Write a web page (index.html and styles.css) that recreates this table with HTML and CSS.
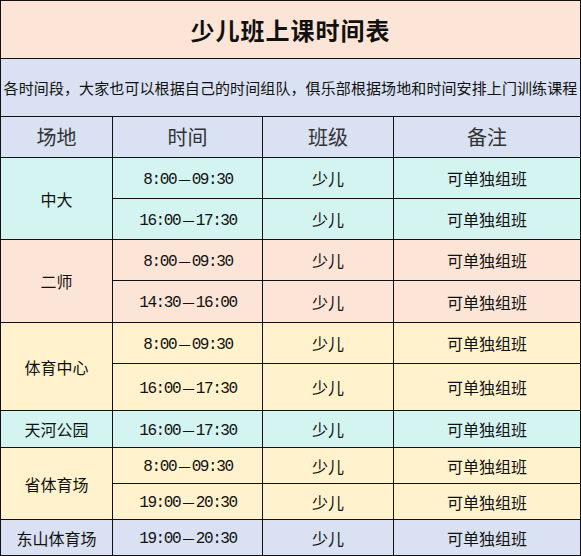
FILE: index.html
```html
<!DOCTYPE html>
<html lang="zh-CN">
<head>
<meta charset="utf-8">
<title>少儿班上课时间表</title>
<link rel="stylesheet" href="styles.css">
</head>
<body>
<table class="sched">
  <colgroup>
    <col class="c-venue"><col class="c-time"><col class="c-class"><col class="c-note">
  </colgroup>
  <tr class="r-title"><td colspan="4" class="title peach">少儿班上课时间表</td></tr>
  <tr class="r-sub"><td colspan="4" class="sub blue">各时间段，大家也可以根据自己的时间组队，俱乐部根据场地和时间安排上门训练课程</td></tr>
  <tr class="r-head blue"><td class="head">场地</td><td class="head">时间</td><td class="head">班级</td><td class="head">备注</td></tr>

  <tr class="r41 cyan"><td rowspan="2">中大</td><td class="t">8:00<span class="dash">—</span>09:30</td><td>少儿</td><td>可单独组班</td></tr>
  <tr class="r41 cyan"><td class="t">16:00<span class="dash">—</span>17:30</td><td>少儿</td><td>可单独组班</td></tr>

  <tr class="r41 peach"><td rowspan="2">二师</td><td class="t">8:00<span class="dash">—</span>09:30</td><td>少儿</td><td>可单独组班</td></tr>
  <tr class="r42 peach"><td class="t">14:30<span class="dash">—</span>16:00</td><td>少儿</td><td>可单独组班</td></tr>

  <tr class="r41 yellow"><td rowspan="2">体育中心</td><td class="t">8:00<span class="dash">—</span>09:30</td><td>少儿</td><td>可单独组班</td></tr>
  <tr class="r47 yellow"><td class="t">16:00<span class="dash">—</span>17:30</td><td>少儿</td><td>可单独组班</td></tr>

  <tr class="r37 cyan"><td>天河公园</td><td class="t">16:00<span class="dash">—</span>17:30</td><td>少儿</td><td>可单独组班</td></tr>

  <tr class="r36 yellow"><td rowspan="2">省体育场</td><td class="t">8:00<span class="dash">—</span>09:30</td><td>少儿</td><td>可单独组班</td></tr>
  <tr class="r36 yellow"><td class="t">19:00<span class="dash">—</span>20:30</td><td>少儿</td><td>可单独组班</td></tr>

  <tr class="r36 blue"><td>东山体育场</td><td class="t">19:00<span class="dash">—</span>20:30</td><td>少儿</td><td>可单独组班</td></tr>
</table>
</body>
</html>
```
FILE: styles.css
```css
html, body {
  margin: 0;
  padding: 0;
  background: #ffffff;
}

.sched {
  border-collapse: collapse;
  table-layout: fixed;
  width: 580px;
  font-family: "Noto Sans CJK SC", "Liberation Sans", sans-serif;
  font-size: 16px;
  color: #111;
}

.c-venue { width: 112px; }
.c-time { width: 150px; }
.c-class { width: 131px; }
.c-note { width: 187px; }

.sched td {
  border: 1px solid #111;
  text-align: center;
  vertical-align: middle;
  padding: 0;
  line-height: 18px;
  overflow: hidden;
  white-space: nowrap;
}

.peach { background: #fce4d6; }
.blue { background: #d9e1f2; }
.cyan { background: #d4f4f1; }
.yellow { background: #fff2cc; }

.r-title { height: 58px; }
.r-sub { height: 58px; }
.r-head { height: 41px; }
.r41 { height: 41px; }
.r42 { height: 42px; }
.r47 { height: 47px; }
.r37 { height: 37px; }
.r36 { height: 36px; }

.title {
  font-size: 24px;
  font-weight: 700;
  letter-spacing: 1px;
  color: #111;
}

.sub {
  font-size: 15px;
  letter-spacing: 0.1px;
}

.head {
  font-size: 20px;
  color: #333;
}

.sched td.t {
  font-family: "Liberation Mono", "Noto Sans CJK SC", monospace;
  font-size: 16px;
  line-height: 16px;
  letter-spacing: -1.4px;
  padding-top: 3px;
  padding-left: 1px;
}

.dash {
  font-family: "Noto Sans CJK SC", sans-serif;
  font-size: 14px;
  line-height: 10px;
  letter-spacing: 0;
  margin: 0 1px 0 2px;
}
```
